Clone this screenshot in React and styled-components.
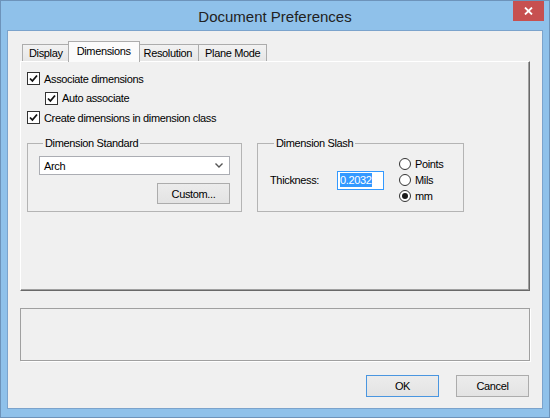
import React from 'react'
import styled, { createGlobalStyle } from 'styled-components'

const GlobalStyle = createGlobalStyle`
  html, body {
    margin: 0;
    padding: 0;
    background: #ffffff;
  }
  body {
    font-family: "Liberation Sans", Arial, sans-serif;
  }
`

const Window = styled.div`
  box-sizing: border-box;
  width: 550px;
  height: 418px;
  display: flex;
  flex-direction: column;
  background: #8fc1ea;
  border: 1px solid #6d93ba;
  padding: 0 6px 8px 6px;
`

const TitleBar = styled.div`
  position: relative;
  height: 29px;
  flex-shrink: 0;
  display: flex;
  align-items: center;
  justify-content: center;
`

const Title = styled.div`
  font-size: 15px;
  color: #222222;
  padding-top: 1px;
`

const CloseButton = styled.div`
  position: absolute;
  top: 0;
  right: -1px;
  width: 31px;
  height: 20px;
  background: #c75050;
  display: flex;
  align-items: center;
  justify-content: center;
`

const Client = styled.div`
  flex: 1;
  display: flex;
  flex-direction: column;
  background: #f0f0f0;
  border: 1px solid #7ba3cc;
  padding: 10px 12px 11px 12px;
  font-size: 11px;
  letter-spacing: -0.35px;
  color: #000000;
`

const TabStrip = styled.div`
  display: flex;
  align-items: flex-end;
  height: 20px;
  padding-left: 2px;
  position: relative;
  z-index: 1;
`

const Tab = styled.div`
  box-sizing: border-box;
  height: ${(p) => (p.$active ? '21px' : '17px')};
  margin-bottom: ${(p) => (p.$active ? '-1px' : '0')};
  margin-right: ${(p) => (p.$active ? '-2px' : '0')};
  margin-left: ${(p) => (p.$first ? '0' : p.$active ? '-2px' : '-1px')};
  padding: ${(p) => (p.$active ? '3px 8px 0 8px' : '2px 6px 0 6px')};
  border: 1px solid #acacac;
  border-bottom: none;
  background: ${(p) => (p.$active ? '#fbfbfb' : 'linear-gradient(#f2f2f2, #e6e6e6)')};
  position: relative;
  z-index: ${(p) => (p.$active ? 2 : 0)};
  white-space: nowrap;
`

const Panel = styled.div`
  box-sizing: border-box;
  height: 230px;
  border-top: 1px solid #ffffff;
  border-left: 1px solid #ffffff;
  border-right: 1px solid #696969;
  border-bottom: 1px solid #696969;
  box-shadow: inset -1px -1px 0 #a0a0a0;
  padding: 10px 0 0 6px;
  display: flex;
  flex-direction: column;
`

const CheckList = styled.div`
  display: flex;
  flex-direction: column;
  gap: 6.5px;
`

const CheckRow = styled.label`
  display: flex;
  align-items: center;
  gap: 4px;
  height: 13px;
  padding-left: ${(p) => p.$indent || 0}px;
`

const Box = styled.span`
  box-sizing: border-box;
  width: 13px;
  height: 13px;
  border: 1px solid #333333;
  background: #ffffff;
  display: flex;
  align-items: center;
  justify-content: center;
  flex-shrink: 0;
`

const Groups = styled.div`
  display: flex;
  gap: 15px;
  margin-top: 13px;
`

const Group = styled.fieldset`
  box-sizing: border-box;
  margin: 0;
  width: ${(p) => p.$width}px;
  min-width: 0;
  border: 1px solid #b4b4b4;
  padding: 0 ${(p) => p.$padRight}px 7px ${(p) => p.$padLeft}px;
`

const Legend = styled.legend`
  padding: 0 2px;
  margin-left: 5px;
  line-height: 13px;
`

const StandardBody = styled.div`
  display: flex;
  flex-direction: column;
  align-items: flex-end;
  gap: 8px;
  padding-top: 6px;
`

const Combo = styled.div`
  box-sizing: border-box;
  width: 191px;
  height: 19px;
  background: #ffffff;
  border: 1px solid #abadb3;
  display: flex;
  align-items: center;
  justify-content: space-between;
  padding: 0 6px 0 4px;
`

const Button = styled.div`
  box-sizing: border-box;
  width: 73px;
  height: ${(p) => p.$h || 21}px;
  border: 1px solid ${(p) => (p.$default ? '#4a96e0' : '#acacac')};
  background: linear-gradient(#ececec, #e3e3e3);
  display: flex;
  align-items: center;
  justify-content: center;
`

const SlashBody = styled.div`
  display: flex;
  align-items: center;
  padding-top: 6px;
`

const FieldLabel = styled.div`
  width: 67px;
  padding-left: 1px;
  flex-shrink: 0;
`

const Field = styled.div`
  box-sizing: border-box;
  width: 47px;
  height: 19px;
  border: 1px solid #3399ff;
  background: #ffffff;
  display: flex;
  align-items: center;
  padding-left: 2px;
`

const Selected = styled.span`
  background: #3399ff;
  color: #ffffff;
  line-height: 14px;
`

const RadioList = styled.div`
  display: flex;
  flex-direction: column;
  margin-left: 15px;
`

const RadioRow = styled.label`
  display: flex;
  align-items: center;
  height: 16px;
  gap: 4px;
`

const Circle = styled.span`
  box-sizing: border-box;
  width: 12px;
  height: 12px;
  border-radius: 50%;
  border: 1px solid #333333;
  background: #ffffff;
  display: flex;
  align-items: center;
  justify-content: center;
  &::after {
    content: '';
    display: ${(p) => (p.$on ? 'block' : 'none')};
    width: 6px;
    height: 6px;
    border-radius: 50%;
    background: #1a1a1a;
  }
`

const StatusBox = styled.div`
  box-sizing: border-box;
  height: 53px;
  margin-top: 17px;
  border: 1px solid #a0a0a0;
  box-shadow: 1px 1px 0 #ffffff;
`

const ButtonRow = styled.div`
  display: flex;
  justify-content: flex-end;
  gap: 17px;
  margin-top: 14px;
  padding-right: 1px;
`

const Check = () => (
  <svg width="9" height="9" viewBox="0 0 9 9">
    <path d="M1 4.5 L3.4 7 L8 1.5" fill="none" stroke="#111" strokeWidth="1.8" />
  </svg>
)

const CheckItem = ({ label, indent }) => (
  <CheckRow $indent={indent}>
    <Box><Check /></Box>
    <span>{label}</span>
  </CheckRow>
)

const Radio = ({ label, on }) => (
  <RadioRow>
    <Circle $on={on} />
    <span>{label}</span>
  </RadioRow>
)

export default function App() {
  return (
    <>
      <GlobalStyle />
      <Window>
        <TitleBar>
          <Title>Document Preferences</Title>
          <CloseButton>
            <svg width="9" height="8" viewBox="0 0 9 8">
              <path d="M1 0.5 L8 7.5 M8 0.5 L1 7.5" stroke="#fff" strokeWidth="1.8" />
            </svg>
          </CloseButton>
        </TitleBar>
        <Client>
          <TabStrip>
            <Tab $first>Display</Tab>
            <Tab $active>Dimensions</Tab>
            <Tab>Resolution</Tab>
            <Tab>Plane Mode</Tab>
          </TabStrip>
          <Panel>
            <CheckList>
              <CheckItem label="Associate dimensions" />
              <CheckItem label="Auto associate" indent={18} />
              <CheckItem label="Create dimensions in dimension class" />
            </CheckList>
            <Groups>
              <Group $width={215} $padLeft={10} $padRight={11}>
                <Legend>Dimension Standard</Legend>
                <StandardBody>
                  <Combo>
                    <span>Arch</span>
                    <svg width="8" height="5" viewBox="0 0 8 5">
                      <path d="M0.5 0.5 L4 4 L7.5 0.5" fill="none" stroke="#555" strokeWidth="1.4" />
                    </svg>
                  </Combo>
                  <Button>Custom...</Button>
                </StandardBody>
              </Group>
              <Group $width={207} $padLeft={11} $padRight={8}>
                <Legend>Dimension Slash</Legend>
                <SlashBody>
                  <FieldLabel>Thickness:</FieldLabel>
                  <Field><Selected>0.2032</Selected></Field>
                  <RadioList>
                    <Radio label="Points" />
                    <Radio label="Mils" />
                    <Radio label="mm" on />
                  </RadioList>
                </SlashBody>
              </Group>
            </Groups>
          </Panel>
          <StatusBox />
          <ButtonRow>
            <Button $default $h={22}>OK</Button>
            <Button $h={22}>Cancel</Button>
          </ButtonRow>
        </Client>
      </Window>
    </>
  )
}
